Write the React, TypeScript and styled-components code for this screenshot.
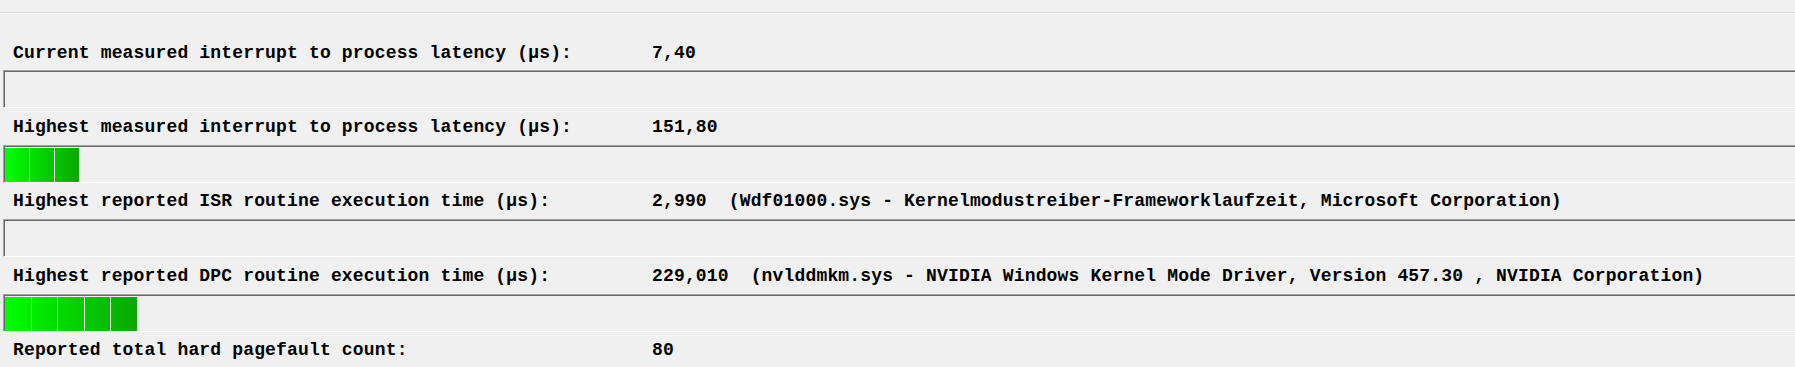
import styled, { createGlobalStyle } from "styled-components";

const GlobalStyle = createGlobalStyle`
  html, body {
    margin: 0;
    padding: 0;
    background: #f0f0f0;
  }
`;

const Window = styled.div`
  width: 1795px;
  height: 367px;
  overflow: hidden;
  background: #f0f0f0;
  font-family: "Liberation Mono", "Courier New", monospace;
  font-weight: bold;
  font-size: 18px;
  letter-spacing: 0.16px;
  color: #000;
`;

const TopStrip = styled.div`
  height: 12px;
  border-bottom: 1px solid #d9d9d9;
  box-shadow: 0 1px 0 #fafafa;
  margin-bottom: 21px;
`;

const Rows = styled.div`
  display: flex;
  flex-direction: column;
`;

const LabelRow = styled.div`
  display: flex;
  align-items: center;
  height: 35.4px;
  padding-left: 13px;
  padding-top: 1px;
  white-space: pre;
`;

const Label = styled.span`
  width: 639px;
  flex-shrink: 0;
`;

const Value = styled.span``;

const Bar = styled.div`
  display: flex;
  gap: 1px;
  height: 34px;
  margin-left: 3px;
  padding: 2px 0 0 1px;
  border-top: 1px solid #a0a0a0;
  border-left: 1px solid #a0a0a0;
  border-bottom: 1px solid #ffffff;
  box-shadow: inset 1px 1px 0 #696969;
`;

const Segment = styled.div<{ $from: string; $to: string; $width: number }>`
  width: ${(p) => p.$width}px;
  height: 100%;
  background: linear-gradient(to right, ${(p) => p.$from}, ${(p) => p.$to});
`;

const mix = (t: number) => {
  const g = Math.round(255 + (168 - 255) * t);
  const r = Math.round(0 + 10 * t);
  return `rgb(${r}, ${g}, 0)`;
};

const LevelBar = ({ count, width }: { count: number; width: number }) => (
  <Bar>
    {Array.from({ length: count }, (_, i) => (
      <Segment
        key={i}
        $width={width}
        $from={mix(i / count)}
        $to={mix((i + 1) / count)}
      />
    ))}
  </Bar>
);

const rows = [
  {
    label: "Current measured interrupt to process latency (µs):",
    value: "7,40",
    segments: 0,
    width: 25,
  },
  {
    label: "Highest measured interrupt to process latency (µs):",
    value: "151,80",
    segments: 3,
    width: 24,
  },
  {
    label: "Highest reported ISR routine execution time (µs):",
    value:
      "2,990  (Wdf01000.sys - Kernelmodustreiber-Frameworklaufzeit, Microsoft Corporation)",
    segments: 0,
    width: 25,
  },
  {
    label: "Highest reported DPC routine execution time (µs):",
    value:
      "229,010  (nvlddmkm.sys - NVIDIA Windows Kernel Mode Driver, Version 457.30 , NVIDIA Corporation)",
    segments: 5,
    width: 25.6,
  },
];

export default function App() {
  return (
    <Window>
      <GlobalStyle />
      <TopStrip />
      <Rows>
        {rows.map((r) => (
          <div key={r.label}>
            <LabelRow>
              <Label>{r.label}</Label>
              <Value>{r.value}</Value>
            </LabelRow>
            <LevelBar count={r.segments} width={r.width} />
          </div>
        ))}
        <LabelRow>
          <Label>Reported total hard pagefault count:</Label>
          <Value>80</Value>
        </LabelRow>
      </Rows>
    </Window>
  );
}
